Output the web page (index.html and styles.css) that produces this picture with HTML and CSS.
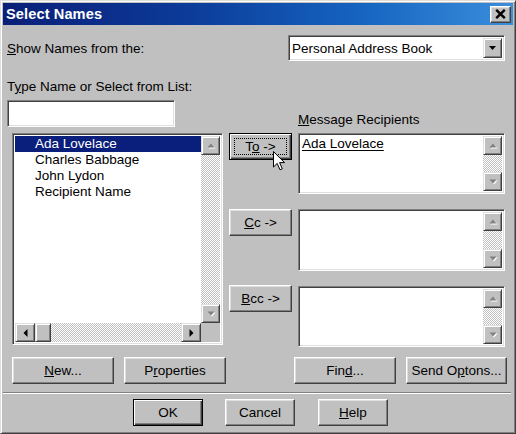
FILE: index.html
```html
<!DOCTYPE html>
<html>
<head>
<meta charset="utf-8">
<title>Select Names</title>
<link rel="stylesheet" href="styles.css">
</head>
<body>
<div class="window">
  <div class="titlebar">
    <span class="title">Select Names</span>
    <span class="close-btn">
      <svg width="11" height="10" viewBox="0 0 11 10"><path d="M1.2 0.8 L9.8 9.2 M9.8 0.8 L1.2 9.2" stroke="#000" stroke-width="2.4" fill="none"/></svg>
    </span>
  </div>

  <div class="show-row">
    <span class="label"><u>S</u>how Names from the:</span>
    <div class="combo">
      <span class="combo-text">Personal Address Book</span>
      <span class="combo-btn"><svg width="8" height="5" viewBox="0 0 8 5"><path d="M0 0 H7 L3.5 4 Z" fill="#000"/></svg></span>
    </div>
  </div>

  <div class="type-label">T<u>y</u>pe Name or Select from List:</div>

  <div class="main">
    <div class="col-left">
      <div class="field textbox"></div>
      <div class="field listbox">
        <div class="list-top">
          <div class="items">
            <div class="item selected">Ada Lovelace</div>
            <div class="item">Charles Babbage</div>
            <div class="item">John Lydon</div>
            <div class="item">Recipient Name</div>
          </div>
          <div class="vscroll">
            <span class="sbtn"><svg width="8" height="5" viewBox="0 0 8 5"><path d="M0.5 4.5 H7.5 L4 0.5 Z" fill="#808080"/></svg></span>
            <span class="track"></span>
            <span class="sbtn"><svg width="8" height="5" viewBox="0 0 8 5"><path d="M0.5 0.5 H7.5 L4 4.5 Z" fill="#808080"/></svg></span>
          </div>
        </div>
        <div class="hscroll-row">
          <div class="hscroll">
            <span class="sbtn"><svg width="5" height="8" viewBox="0 0 5 8"><path d="M4.5 0 V8 L0.5 4 Z" fill="#000"/></svg></span>
            <span class="sbtn thumb"></span>
            <span class="track"></span>
            <span class="sbtn"><svg width="5" height="8" viewBox="0 0 5 8"><path d="M0.5 0 V8 L4.5 4 Z" fill="#000"/></svg></span>
          </div>
          <span class="corner"></span>
        </div>
      </div>
    </div>

    <div class="col-mid">
      <div class="btn default to-btn">
        <span class="focus"><span>T<u>o</u> -&gt;</span></span>
        <svg class="cursor" width="13" height="20" viewBox="0 0 13 20"><path d="M0.5 0.5 V16 L4.2 12.4 L7 18.8 L9.3 17.8 L6.6 11.6 H11.5 Z" fill="#fff" stroke="#000" stroke-width="1" stroke-linejoin="miter"/></svg>
      </div>
      <div class="btn cc-btn"><span><u>C</u>c -&gt;</span></div>
      <div class="btn bcc-btn"><span><u>B</u>cc -&gt;</span></div>
    </div>

    <div class="col-right">
      <div class="recip-label"><u>M</u>essage Recipients</div>
      <div class="field recip r1">
        <div class="recip-items"><span class="resolved">Ada Lovelace</span></div>
        <div class="vscroll">
          <span class="sbtn"><svg width="8" height="5" viewBox="0 0 8 5"><path d="M0.5 4.5 H7.5 L4 0.5 Z" fill="#808080"/></svg></span>
          <span class="track"></span>
          <span class="sbtn"><svg width="8" height="5" viewBox="0 0 8 5"><path d="M0.5 0.5 H7.5 L4 4.5 Z" fill="#808080"/></svg></span>
        </div>
      </div>
      <div class="field recip r2">
        <div class="recip-items"></div>
        <div class="vscroll">
          <span class="sbtn"><svg width="8" height="5" viewBox="0 0 8 5"><path d="M0.5 4.5 H7.5 L4 0.5 Z" fill="#808080"/></svg></span>
          <span class="track"></span>
          <span class="sbtn"><svg width="8" height="5" viewBox="0 0 8 5"><path d="M0.5 0.5 H7.5 L4 4.5 Z" fill="#808080"/></svg></span>
        </div>
      </div>
      <div class="field recip r3">
        <div class="recip-items"></div>
        <div class="vscroll">
          <span class="sbtn"><svg width="8" height="5" viewBox="0 0 8 5"><path d="M0.5 4.5 H7.5 L4 0.5 Z" fill="#808080"/></svg></span>
          <span class="track"></span>
          <span class="sbtn"><svg width="8" height="5" viewBox="0 0 8 5"><path d="M0.5 0.5 H7.5 L4 4.5 Z" fill="#808080"/></svg></span>
        </div>
      </div>
    </div>
  </div>

  <div class="action-row">
    <div class="btn wide new-btn"><span><u>N</u>ew...</span></div>
    <div class="btn wide props-btn"><span>P<u>r</u>operties</span></div>
    <div class="btn wide find-btn"><span>Fin<u>d</u>...</span></div>
    <div class="btn wide send-btn"><span>Send O<u>p</u>tons...</span></div>
  </div>

  <div class="separator"></div>

  <div class="footer">
    <div class="btn default foot ok-btn"><span>OK</span></div>
    <div class="btn foot cancel-btn"><span>Cancel</span></div>
    <div class="btn foot help-btn"><span><u>H</u>elp</span></div>
  </div>
</div>
</body>
</html>
```

FILE: styles.css
```css
html, body {
  margin: 0;
  padding: 0;
  background: #c0c0c0;
}

body {
  font-family: "Liberation Sans", Arial, sans-serif;
  font-size: 13.5px;
  color: #000;
}

u {
  text-decoration: underline;
  text-underline-offset: 1px;
}

.window {
  box-sizing: border-box;
  width: 516px;
  height: 434px;
  background: #c0c0c0;
  border: 1px solid;
  border-color: #dfdfdf #404040 #404040 #dfdfdf;
  box-shadow: inset 1px 1px #fff, inset -1px -1px #808080;
  padding: 2px;
  display: flex;
  flex-direction: column;
}

/* title bar */
.titlebar {
  height: 22px;
  display: flex;
  align-items: center;
  justify-content: space-between;
  padding-left: 3px;
  padding-right: 2px;
  background: linear-gradient(to right, #0a1f78 0%, #0c3a98 35%, #1564c0 70%, #3a8edc 100%);
}

.title {
  color: #fff;
  font-weight: bold;
  font-size: 14.6px;
  letter-spacing: 0.1px;
}

.close-btn {
  box-sizing: border-box;
  width: 21px;
  height: 17px;
  background: #c0c0c0;
  border: 1px solid;
  border-color: #fff #404040 #404040 #fff;
  box-shadow: inset -1px -1px #808080, inset 1px 1px #dfdfdf;
  display: flex;
  align-items: center;
  justify-content: center;
}

/* show names row */
.show-row {
  margin-top: 10px;
  height: 26px;
  display: flex;
  align-items: center;
  justify-content: space-between;
  padding-left: 4px;
  padding-right: 8px;
}

.combo {
  box-sizing: border-box;
  width: 217px;
  height: 26px;
  background: #fff;
  border: 1px solid;
  border-color: #808080 #fff #fff #808080;
  box-shadow: inset 1px 1px #404040, inset -1px -1px #dfdfdf;
  padding: 2px;
  display: flex;
  align-items: center;
}

.combo-text {
  flex: 1;
  padding-left: 1px;
}

.combo-btn {
  box-sizing: border-box;
  width: 19px;
  height: 20px;
  background: #c0c0c0;
  border: 1px solid;
  border-color: #dfdfdf #404040 #404040 #dfdfdf;
  box-shadow: inset 1px 1px #fff, inset -1px -1px #808080;
  display: flex;
  align-items: center;
  justify-content: center;
}

.type-label {
  margin-top: 18px;
  height: 16px;
  line-height: 16px;
  padding-left: 4px;
}

/* main area */
.main {
  margin-top: 5px;
  display: flex;
  padding-left: 4px;
  height: 247px;
}

.field {
  box-sizing: border-box;
  background: #fff;
  border: 1px solid;
  border-color: #808080 #fff #fff #808080;
  box-shadow: inset 1px 1px #404040, inset -1px -1px #dfdfdf;
}

.col-left {
  width: 216px;
  display: flex;
  flex-direction: column;
}

.textbox {
  width: 168px;
  height: 27px;
}

.listbox {
  margin-top: 6px;
  margin-left: 5px;
  width: 211px;
  height: 212px;
  padding: 2px;
  display: flex;
  flex-direction: column;
}

.list-top {
  flex: 1;
  display: flex;
}

.items {
  flex: 1;
}

.item {
  height: 16px;
  line-height: 16px;
  padding-left: 20px;
}

.item.selected {
  background: #0a1e7c;
  color: #fff;
}

.vscroll {
  width: 19px;
  display: flex;
  flex-direction: column;
}

.sbtn {
  box-sizing: border-box;
  width: 19px;
  height: 19px;
  flex: none;
  background: #c0c0c0;
  border: 1px solid;
  border-color: #dfdfdf #404040 #404040 #dfdfdf;
  box-shadow: inset 1px 1px #fff, inset -1px -1px #808080;
  display: flex;
  align-items: center;
  justify-content: center;
}

.sbtn svg {
  filter: drop-shadow(1px 1px 0 #fff);
}

.hscroll .sbtn svg {
  filter: none;
}

.track {
  flex: 1;
  background: repeating-conic-gradient(#c0c0c0 0 25%, #fff 0 50%) 0 0 / 2px 2px;
}

.hscroll-row {
  height: 19px;
  display: flex;
}

.hscroll {
  flex: 1;
  display: flex;
}

.hscroll .sbtn {
  width: 20px;
}

.hscroll .thumb {
  width: 16px;
}

.corner {
  width: 19px;
  background: #c0c0c0;
}

/* middle buttons */
.col-mid {
  margin-left: 6px;
  width: 63px;
  display: flex;
  flex-direction: column;
  padding-top: 33px;
}

.btn {
  box-sizing: border-box;
  height: 27px;
  background: #c0c0c0;
  border: 1px solid;
  border-color: #fff #404040 #404040 #fff;
  box-shadow: inset -1px -1px #808080, inset 1px 1px #dfdfdf;
  display: flex;
  align-items: center;
  justify-content: center;
  flex: none;
  white-space: pre;
}

.btn.default {
  border-color: #000;
  box-shadow: inset 1px 1px #fff, inset -1px -1px #404040, inset -2px -2px #808080;
}

.to-btn {
  position: relative;
  padding: 4px;
}

.focus {
  flex: 1;
  align-self: stretch;
  display: flex;
  align-items: center;
  justify-content: center;
  outline: 1px dotted #000;
  outline-offset: -1px;
}

.cursor {
  position: absolute;
  left: 43px;
  top: 17px;
}

.cc-btn,
.bcc-btn {
  margin-top: 49px;
}

/* right column */
.col-right {
  margin-left: 6px;
  width: 207px;
  display: flex;
  flex-direction: column;
}

.recip-label {
  margin-top: 12px;
  height: 16px;
  line-height: 16px;
}

.recip {
  margin-top: 5px;
  padding: 2px;
  display: flex;
}

.r1 { height: 61px; }
.r2 { height: 62px; margin-top: 15px; }
.r3 { height: 61px; margin-top: 15px; }

.recip-items {
  flex: 1;
  padding-left: 1px;
  line-height: 16px;
}

.resolved {
  text-decoration: underline;
  text-underline-offset: 2px;
}

/* action row */
.action-row {
  margin-top: 10px;
  display: flex;
  padding-left: 9px;
}

.wide {
  width: 102px;
}

.props-btn { margin-left: 10px; }
.find-btn { margin-left: 68px; }
.send-btn { margin-left: 10px; width: 101px; }

.separator {
  margin-top: 8px;
  margin-right: 2px;
  height: 0;
  border-top: 1px solid #808080;
  border-bottom: 1px solid #fff;
}

.footer {
  margin-top: 5px;
  display: flex;
  padding-left: 130px;
}

.foot {
  width: 70px;
}

.cancel-btn { margin-left: 22px; }
.help-btn { margin-left: 23px; }
```
